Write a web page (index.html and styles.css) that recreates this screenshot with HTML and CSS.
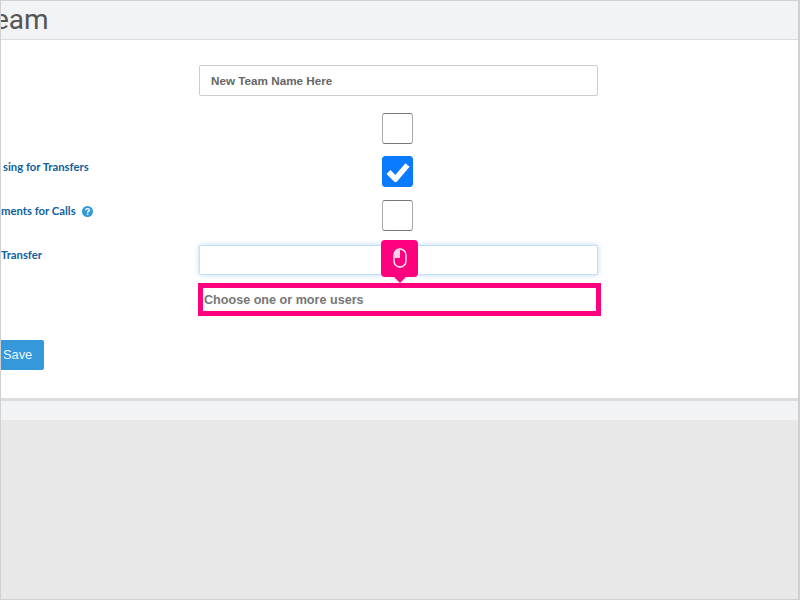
FILE: index.html
```html
<!DOCTYPE html>
<html lang="en">
<head>
<meta charset="utf-8">
<title>Team</title>
<link rel="stylesheet" href="styles.css">
</head>
<body>
<div class="frame">
  <header class="head"><h1 class="title">eam</h1></header>
  <main class="panel">
    <form class="form">
      <div class="row row-name">
        <div class="label"></div>
        <div class="control"><div class="input name">New Team Name Here</div></div>
      </div>
      <div class="row row-check">
        <div class="label"></div>
        <div class="control center"><span class="box"></span></div>
      </div>
      <div class="row row-check">
        <div class="label label-shift"><span class="label-text">sing for Transfers</span></div>
        <div class="control center">
          <span class="box on">
            <svg class="tick" viewBox="0 0 24 20" width="24" height="20"><path d="M2.5 10 L9.5 17 L21.5 3" fill="none" stroke="#fff" stroke-width="5.5"/></svg>
          </span>
        </div>
      </div>
      <div class="row row-check">
        <div class="label label-low"><span class="label-text">ments for Calls</span><svg class="help" viewBox="0 0 11 11" width="11" height="11"><circle cx="5.5" cy="5.5" r="5.5" fill="#3498db"/><path d="M3.7 4.3 C3.7 2 7.4 2.2 7.4 4.2 C7.4 5.5 5.6 5.4 5.6 6.7" fill="none" stroke="#fff" stroke-width="1.4"/><rect x="4.9" y="7.6" width="1.4" height="1.4" fill="#fff"/></svg></div>
        <div class="control center"><span class="box"></span></div>
      </div>
      <div class="row row-focus">
        <div class="label"><span class="label-text">Transfer</span></div>
        <div class="control"><div class="input focus"></div></div>
      </div>
      <div class="row row-users">
        <div class="label"></div>
        <div class="control users">
          <div class="highlight">Choose one or more users</div>
          <div class="pin">
            <svg viewBox="0 0 14 20" width="14" height="20"><rect x="1" y="1" width="12" height="18" rx="6" fill="none" stroke="#fff" stroke-width="1.3"/><path d="M1.5 10 H7 V1.5 A5.5 5.5 0 0 0 1.5 7 Z" fill="#ffd0e6"/></svg>
          </div>
        </div>
      </div>
      <div class="actions"><button class="save" type="button">Save</button></div>
    </form>
  </main>
  <div class="strip"></div>
</div>
</body>
</html>
```

FILE: styles.css
```css
* { box-sizing: border-box; }
html, body { margin: 0; height: 100%; }
body { width: 800px; height: 600px; overflow: hidden; background: #e8e8e8; font-family: "Liberation Sans", Arial, sans-serif; }
.frame { height: 600px; border: 1px solid #d0d0d0; border-width: 1px 2px 1px 1px; background: #e8e8e8; overflow: hidden; }
.head { height: 39px; background: #f2f3f5; border-bottom: 1px solid #dcdcdc; overflow: hidden; }
.title { margin: 0 0 0 -7px; font: 400 28px/38px Roboto, sans-serif; color: #555; white-space: nowrap; }
.panel { background: #fff; height: 361px; border-bottom: 3px solid #dcdcdc; }
.form { padding-top: 25px; }
.row { display: flex; }
.row-name { height: 48px; }
.row-check { height: 43.4px; }
.row-focus { height: 38px; margin-top: 1.8px; }
.row-users { height: 57px; }
.label { width: 198px; height: 100%; flex: none; display: flex; align-items: flex-start; gap: 6px; padding-top: 3px; font: 700 11.3px/14px Lato, sans-serif; color: #11609b; white-space: nowrap; }
.label-shift { padding-left: 2px; padding-top: 4px; }
.label-low { padding-top: 4.4px; }
.label-text { flex: none; }
.help { flex: none; margin-top: 2px; }
.control { width: 399px; flex: none; }
.center { display: flex; justify-content: center; padding-right: 2px; }
.input { height: 31px; background: #fff; border: 1px solid #ccc; border-radius: 2px; }
.name { padding: 0 11px; font-size: 11.7px; font-weight: 700; line-height: 30px; color: #666; }
.focus { height: 30px; border-color: #c4dff5; box-shadow: 0 0 5px rgba(120, 180, 235, .5); }
.box { width: 31px; height: 31px; border: 1px solid #aaa; border-top-color: #777; border-bottom-color: #777; border-radius: 3px; background: #fff; display: flex; align-items: center; justify-content: center; }
.box.on { background: #0a7bff; border-color: #0a7bff; }
.users { position: relative; }
.highlight { width: 403px; height: 33px; margin-left: -1px; border: 5px solid #ff007f; padding-left: 1px; background: #fff; font-size: 12.6px; font-weight: 700; line-height: 24px; color: #777; }
.pin { position: absolute; left: 182px; top: -43px; width: 37px; height: 37px; background: #ff007f; border-radius: 4px; display: flex; align-items: center; justify-content: center; }
.pin::after { content: ""; position: absolute; left: 13px; bottom: -6px; border: 6px solid transparent; border-bottom: 0; border-top-color: #ff007f; }
.actions { display: flex; }
.save { width: 43px; height: 30px; border: 0; border-radius: 0 2px 2px 0; padding: 0 0 0 2px; background: #3498db; color: #eef6fc; font: 400 12.8px "Liberation Sans", Arial, sans-serif; text-align: left; }
.strip { height: 19px; background: #f2f3f5; }
```
